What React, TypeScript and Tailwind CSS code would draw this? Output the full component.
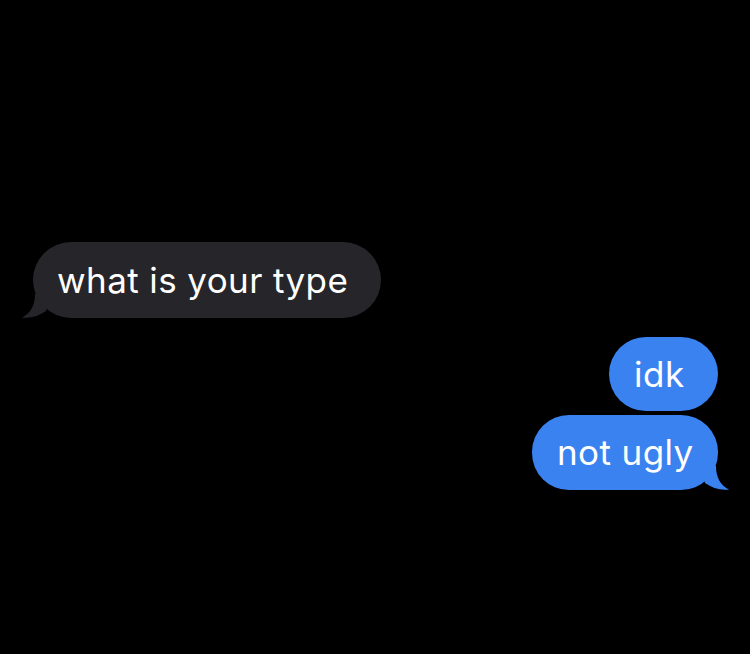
import React from 'react';

function TailLeft({ color }: { color: string }) {
  return (
    <svg className="absolute -left-[11px] bottom-0" width="30" height="24" viewBox="0 0 30 24">
      <path d="M13 0 C13 11 9 19 0 23.5 C9 24.5 17 22 24 17 L30 0 Z" fill={color} />
    </svg>
  );
}

function TailRight({ color }: { color: string }) {
  return (
    <svg className="absolute -right-[11px] bottom-0" width="30" height="24" viewBox="0 0 30 24">
      <path d="M17 0 C17 11 21 19 30 23.5 C21 24.5 13 22 6 17 L0 0 Z" fill={color} />
    </svg>
  );
}

export default function App() {
  return (
    <div
      className="w-[750px] h-[654px] bg-black flex flex-col text-white"
      style={{ fontFamily: 'Inter, "Open Sans", sans-serif' }}
    >
      {/* incoming */}
      <div className="mt-[242px] ml-[33px] self-start relative">
        <TailLeft color="#26252a" />
        <div className="relative h-[76px] w-[348px] pl-[24px] rounded-[38px] bg-[#26252a] flex items-center text-[35px] tracking-[0.4px]">
          what is your type
        </div>
      </div>

      {/* outgoing */}
      <div className="mt-[19px] mr-[32px] self-end flex flex-col items-end gap-[4px]">
        <div className="h-[74px] w-[109px] pl-[25px] rounded-[37px] bg-[#3b82f1] flex items-center text-[35px] tracking-[0.6px]">
          idk
        </div>
        <div className="relative">
          <TailRight color="#3b82f1" />
          <div className="relative h-[75px] w-[186px] pl-[25px] rounded-[37px] bg-[#3b82f1] flex items-center text-[35px] tracking-[0.4px]">
            not ugly
          </div>
        </div>
      </div>
    </div>
  );
}
